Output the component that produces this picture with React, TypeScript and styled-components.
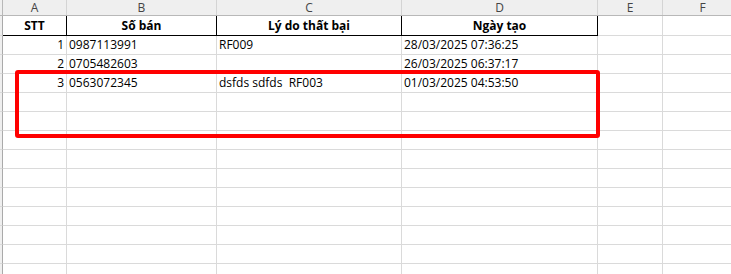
import React from "react";
import styled, { createGlobalStyle } from "styled-components";

const Global = createGlobalStyle`
  html, body { margin: 0; padding: 0; background: #ffffff; }
  body { font-family: "Open Sans", "Lato", sans-serif; overflow: hidden; }
`;

const GRID = "#dadada";
const COLS = "3px 64px 150px 185px 196px 65px 80px";

const Sheet = styled.div`
  position: relative;
  width: 731px;
  height: 274px;
  overflow: hidden;
  background: #ffffff;
`;

const HeaderBar = styled.div`
  display: grid;
  grid-template-columns: ${COLS};
  height: 16px;
  background: #efefef;
  border-bottom: 1px solid #b8b8b8;
  box-sizing: border-box;
`;

const ColLetter = styled.div`
  display: flex;
  align-items: center;
  justify-content: center;
  border-right: 1px solid #d4d4d4;
  color: #444444;
  font-size: 12px;
  line-height: 15px;
  box-sizing: border-box;
`;

const Corner = styled.div`
  border-right: 1px solid #b8b8b8;
  background: #efefef;
`;

const Row = styled.div`
  display: grid;
  grid-template-columns: ${COLS};
  height: ${(p: { $h?: number }) => p.$h ?? 19}px;
`;

const RowHead = styled.div`
  background: #efefef;
  border-right: 1px solid #aaaaaa;
  border-bottom: 1px solid ${GRID};
  box-sizing: border-box;
`;

const Cell = styled.div<{ $align?: "left" | "right" | "center"; $bold?: boolean; $frame?: boolean }>`
  display: flex;
  align-items: flex-end;
  justify-content: ${(p) =>
    p.$align === "right" ? "flex-end" : p.$align === "center" ? "center" : "flex-start"};
  padding: 0 2px 1px 2px;
  box-sizing: border-box;
  border-right: 1px solid ${(p) => (p.$frame ? "#000000" : GRID)};
  border-bottom: 1px solid ${(p) => (p.$frame ? "#000000" : GRID)};
  font-size: 12px;
  line-height: 16px;
  font-weight: ${(p) => (p.$bold ? 700 : 400)};
  color: #000000;
  white-space: pre;
  overflow: visible;
`;

const Highlight = styled.div`
  position: absolute;
  left: 15px;
  top: 70px;
  width: 585px;
  height: 68px;
  border: 4px solid #ff0000;
  border-radius: 3px;
  box-sizing: border-box;
  pointer-events: none;
`;

const letters = ["A", "B", "C", "D", "E", "F"];
const headers = ["STT", "Số bán", "Lý do thất bại", "Ngày tạo"];
const data: [string, string, string, string][] = [
  ["1", "0987113991", "RF009", "28/03/2025 07:36:25"],
  ["2", "0705482603", "", "26/03/2025 06:37:17"],
  ["3", "0563072345", "dsfds sdfds  RF003", "01/03/2025 04:53:50"],
];

export default function App() {
  const blankRows = 12;
  return (
    <Sheet>
      <Global />
      <HeaderBar>
        <Corner />
        {letters.map((l) => (
          <ColLetter key={l}>{l}</ColLetter>
        ))}
      </HeaderBar>
      <Row $h={20}>
        <RowHead />
        {headers.map((h) => (
          <Cell key={h} $align="center" $bold $frame>
            {h}
          </Cell>
        ))}
        <Cell />
        <Cell />
      </Row>
      {data.map((r) => (
        <Row key={r[0]}>
          <RowHead />
          <Cell $align="right">{r[0]}</Cell>
          <Cell>{r[1]}</Cell>
          <Cell>{r[2]}</Cell>
          <Cell>{r[3]}</Cell>
          <Cell />
          <Cell />
        </Row>
      ))}
      {Array.from({ length: blankRows }).map((_, i) => (
        <Row key={`b${i}`}>
          <RowHead />
          <Cell />
          <Cell />
          <Cell />
          <Cell />
          <Cell />
          <Cell />
        </Row>
      ))}
      <Highlight />
    </Sheet>
  );
}
